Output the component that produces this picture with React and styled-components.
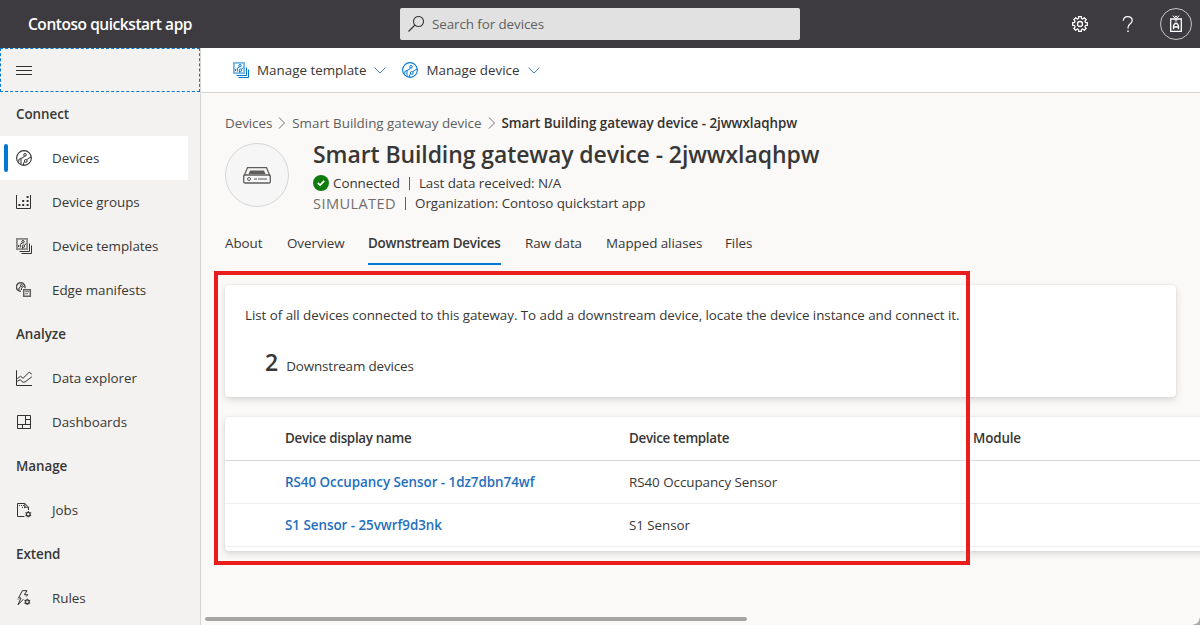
import React from "react";
import styled, { createGlobalStyle, css } from "styled-components";

const GlobalStyle = createGlobalStyle`
  * { box-sizing: border-box; }
  html, body, #root { height: 100%; margin: 0; }
  body {
    overflow: hidden;
    font-family: "Open Sans", "Noto Sans", sans-serif;
    font-size: 13.4px;
    color: #383736;
    background: #faf9f8;
  }
  svg { display: block; flex: none; }
`;

const Text = styled.span`
  white-space: nowrap;
  letter-spacing: ${(p) => p.$track ?? -0.05}px;
`;

const Page = styled.div`
  position: relative;
  display: flex;
  flex-direction: column;
  width: 1200px;
  height: 625px;
  overflow: hidden;
`;

const TopBar = styled.header`
  display: flex;
  align-items: center;
  height: 48px;
  flex: none;
  padding: 0 8px 0 28px;
  color: #fff;
  background: #3d3b40;
`;

const AppName = styled(Text)`
  width: 372px;
  font-size: 15.5px;
  font-weight: 600;
`;

const SearchBox = styled.div`
  display: flex;
  align-items: center;
  gap: 8px;
  width: 400px;
  height: 32px;
  padding-left: 8px;
  border-radius: 2px;
  color: #605e5c;
  background: #e1e1e1;
`;

const TopActions = styled.div`
  display: flex;
  align-items: center;
  margin-left: auto;
  gap: 32px;
`;

const Avatar = styled.div`
  display: grid;
  place-items: center;
  width: 32px;
  height: 32px;
  margin-left: -8px;
  border: 1px solid #c8c6c4;
  border-radius: 50%;
`;

const Body = styled.div`
  display: flex;
  flex: 1;
  min-height: 0;
`;

const Sidebar = styled.nav`
  flex: none;
  width: 201px;
  border-right: 1px solid #d6d5d4;
  background: #f3f2f1;
`;

const MenuToggle = styled.div`
  display: flex;
  align-items: center;
  height: 44px;
  padding-left: 15px;
  border: 1px dashed #0078d4;
`;

const GroupTitle = styled.div`
  display: flex;
  align-items: center;
  height: 44px;
  padding-left: 16px;
  font-weight: 600;
`;

const NavItem = styled.div`
  display: flex;
  align-items: center;
  width: 188px;
  height: 44px;
  padding-left: ${(p) => (p.$active ? 4 : 16)}px;
  background: ${(p) => (p.$active ? "#fff" : "transparent")};
  svg { margin-right: 20px; }
`;

const ActiveMark = styled.span`
  width: 4px;
  height: 28px;
  margin-right: 8px;
  border-radius: 2px;
  background: #0078d4;
`;

const Main = styled.main`
  display: flex;
  flex-direction: column;
  flex: 1;
  min-width: 0;
  overflow: hidden;
`;

const CommandBar = styled.div`
  display: flex;
  flex: none;
  align-items: center;
  gap: 16px;
  height: 45px;
  padding-left: 32px;
  border-bottom: 1px solid #d6d5d4;
  background: #fff;
`;

const Command = styled.div`
  display: flex;
  align-items: center;
  gap: 8px;
`;

const Content = styled.div`
  display: flex;
  flex-direction: column;
  flex: 1;
  padding: 20px 0 0 24px;
`;

const Breadcrumb = styled.div`
  display: flex;
  align-items: center;
  height: 20px;
  color: #605e5c;
  svg { margin: 0 6px; }
`;

const Current = styled(Text)`
  font-weight: 600;
  color: #323130;
`;

const DeviceHeader = styled.div`
  display: flex;
  gap: 24px;
  height: 84px;
`;

const DeviceBadge = styled.div`
  display: grid;
  place-items: center;
  width: 64px;
  height: 64px;
  margin-top: 10px;
  border: 1px solid #d6d6d6;
  border-radius: 50%;
  background: #f6f6f6;
`;

const DeviceInfo = styled.div`
  display: flex;
  flex-direction: column;
`;

const Title = styled.h1`
  height: 40px;
  margin: 0;
  font-size: 23px;
  font-weight: 600;
  line-height: 43px;
`;

const InfoLine = styled.div`
  display: flex;
  align-items: center;
  height: 20px;
`;

const Status = styled(Text)`
  margin-left: 4px;
`;

const Divider = styled.span`
  width: 1px;
  height: 13px;
  margin: 0 9px;
  background: #605e5c;
`;

const Simulated = styled(Text)`
  font-size: 14.6px;
  color: #72706e;
`;

const Tabs = styled.div`
  display: flex;
  gap: 24px;
  height: 48px;
`;

const Tab = styled.div`
  width: ${(p) => p.$width}px;
  height: 48px;
  line-height: 53px;
  ${(p) => p.$active && css`
    font-weight: 600;
    border-bottom: 2px solid #0078d4;
  `}
`;

const cardShadow = css`
  border-radius: 4px;
  background: #fff;
  box-shadow: 0 3px 7px rgba(0, 0, 0, 0.13), 0 0 2px rgba(0, 0, 0, 0.1);
`;

const SummaryCard = styled.section`
  ${cardShadow}
  width: 951px;
  height: 112px;
  margin-top: 20px;
  padding: 20px;
`;

const Description = styled.div`
  height: 20px;
  line-height: 20px;
`;

const CountRow = styled.div`
  display: flex;
  align-items: baseline;
  gap: 8px;
  margin-top: 19px;
  padding-left: 20px;
  line-height: 36px;
`;

const Count = styled.span`
  font-size: 23px;
  font-weight: 600;
`;

const Table = styled.section`
  ${cardShadow}
  width: 1100px;
  height: 134px;
  margin-top: 20px;
`;

const Row = styled.div`
  display: grid;
  grid-template-columns: 344px 344px 1fr;
  align-items: center;
  height: ${(p) => (p.$head ? 44 : 43)}px;
  padding-left: 60px;
  padding-bottom: ${(p) => (p.$head ? 1 : 0)}px;
  border-bottom: 1px solid ${(p) => (p.$head ? "#d8d8d8" : "#efeeed")};
  font-weight: ${(p) => (p.$head ? 600 : 400)};
`;

const DeviceLink = styled(Text)`
  font-weight: 600;
  color: #1f6fbd;
`;

const ScrollTrack = styled.div`
  margin-top: auto;
  margin-left: -20px;
  padding-bottom: 4px;
`;

const ScrollThumb = styled.div`
  width: 542px;
  height: 4px;
  border-radius: 2px;
  background: #a6a5a4;
`;

const Highlight = styled.div`
  position: absolute;
  left: 214px;
  top: 271px;
  width: 756px;
  height: 294px;
  border: 4px solid #ea1c1c;
  pointer-events: none;
`;

const WindowCorner = styled.div`
  position: absolute;
  right: 0;
  bottom: 0;
  width: 7px;
  height: 7px;
  background: radial-gradient(circle at 0 0, transparent 6px, #a9a8a8 7px);
`;

const Svg = ({ w = 16, h = 16, box, color = "#323130", children }) => (
  <svg width={w} height={h} viewBox={box || `0 0 ${w} ${h}`} fill="none" stroke={color} strokeWidth="1">
    {children}
  </svg>
);

const Circuit = () => (
  <>
    <circle cx="9" cy="4.8" r="1.3" />
    <circle cx="9.8" cy="10.9" r="1.4" />
    <path d="M8.4 6L7.7 7.2L5 8.4V13.8M2.8 11.8V9.5L5 8.4M10.8 9.8L13 8L15 7.2M8.7 11.8L7.6 13V15" />
  </>
);

const DeviceIcon = ({ color }) => (
  <Svg color={color}><circle cx="8" cy="8" r="7.4" strokeWidth="1.1" /><Circuit /></Svg>
);

const TemplateIcon = ({ color = "#323130" }) => (
  <Svg color={color}>
    <path d="M.9 .9H11.1V11.1H.9Z" strokeWidth="1.8" opacity=".55" />
    <circle cx="7" cy="3.7" r="1.2" />
    <circle cx="7.4" cy="8.2" r="1.2" />
    <path d="M6.5 5L4.3 6.2V9.5M2.5 9V7M8.4 7.2L10.4 5.5M6.6 9V10.6" />
    <path d="M13.5 5.5V13.5H3.5M15.5 7.5V15.5H5.5" />
  </Svg>
);

const GroupsIcon = () => (
  <Svg>
    <path d="M.5 1V14.5H14.5V1" />
    <path d="M2.4 11H4.4M6.2 11H8.2M10.6 11H12.6M6.2 7H8.2M10.6 7H12.6M10.6 3H12.6" strokeWidth="2" />
  </Svg>
);

const EdgeIcon = () => (
  <Svg>
    <path d="M8.8 6.3A4.3 4.3 0 1 0 5 9.3" strokeWidth="1.4" opacity=".85" />
    <circle cx="5.4" cy="3.5" r="1" />
    <path d="M4.8 4.6L3 6V8.2M7.8 4.2L5.4 6.2V8" />
    <path d="M7.7 7.7H14.3V14.3H7.7Z" strokeWidth="1.5" opacity=".75" />
    <path d="M9.2 9.7H13M9.2 11.7H12" opacity=".7" />
  </Svg>
);

const ExplorerIcon = () => (
  <Svg>
    <path d="M.5 .3V15.5H16" />
    <path d="M1.2 8.7L4.5 6.3L7 8.3L13.2 2.2L15.8 4.2M1.2 11.3L4.2 9.8L7.2 12.3L9 12L15.8 6.8" />
  </Svg>
);

const DashboardIcon = () => (
  <Svg><path d="M1.5 1.5H14.5V14.5H1.5ZM9.5 1.5V10.5M1.5 10.5H14.5M9.5 5.5H14.5M6.5 10.5V14.5" /></Svg>
);

const SmallGear = ({ x, y }) => (
  <g transform={`translate(${x} ${y})`}>
    <circle r="1.9" strokeWidth="1.3" />
    <path d="M0 -3.2V-2M0 3.2V2M-2.9 -1.6L-1.8 -1M2.9 -1.6L1.8 -1M-2.9 1.6L-1.8 1M2.9 1.6L1.8 1" />
  </g>
);

const JobsIcon = () => (
  <Svg>
    <path d="M8.3 14.5H1.5V1.5H8.8L12.5 5.2V8M8.8 1.5V5.2H12.5" />
    <path d="M3 3.5H8M6 5.5H9" strokeDasharray="1 1" />
    <SmallGear x={12.3} y={12.2} />
  </Svg>
);

const RulesIcon = () => (
  <Svg>
    <path d="M6.3 .7L2.6 8H5L2 14.8L7.4 9.2M6.3 .7H11L8.4 4.7H11.8L10 6.7" />
    <path d="M1.6 9.2H2.4" />
    <SmallGear x={11.3} y={11.8} />
  </Svg>
);

const gearPath = (() => {
  const pts = [];
  for (let i = 0; i < 8; i += 1) {
    const a = (i * Math.PI) / 4;
    [[-0.26, 5.7], [-0.18, 7.6], [0.18, 7.6], [0.26, 5.7]].forEach(([d, r]) => {
      pts.push(`${(8 + r * Math.sin(a + d)).toFixed(2)} ${(8 - r * Math.cos(a + d)).toFixed(2)}`);
    });
  }
  return `M${pts.join("L")}Z`;
})();

const GearIcon = () => (
  <Svg color="#fff">
    <path d={gearPath} strokeWidth="1.3" strokeLinejoin="round" />
    <circle cx="8" cy="8" r="2.5" strokeWidth="1.3" />
  </Svg>
);

const HelpIcon = () => (
  <Svg color="#fff">
    <path d="M3.3 4.7C3.3 2.2 5.2 .6 7.8 .6C10.5 .6 12.2 2.2 12.2 4.5C12.2 7.9 8 7.8 8 11.6V12.4" strokeWidth="1.2" />
    <path d="M8 14.4V16" strokeWidth="1.5" />
  </Svg>
);

const BadgeIcon = () => (
  <Svg w={16} h={18} color="#fff">
    <path d="M2.7 4H13.3V16.4H2.7Z" strokeWidth="1.3" />
    <path d="M4.8 .6L8 4.4L11.2 .6M7 .8L8 2.4L9 .8M6.8 5.9H9.2" />
    <path d="M5.5 14.2V10.8L7 8.5H9L10.5 10.8V14.2M5.5 12H10.5" strokeWidth="1.3" />
  </Svg>
);

const SearchIcon = () => (
  <Svg color="#3b3a39"><circle cx="10.5" cy="5.5" r="5" strokeWidth="1.1" /><path d="M7 9L.5 15.5" strokeWidth="1.2" /></Svg>
);

const ChevronDown = () => <Svg w={12} h={7} color="#3f7cae"><path d="M.5 .6L6 6.1L11.5 .6" /></Svg>;
const ChevronRight = () => <Svg w={8} h={12} color="#72706e"><path d="M1 .5L6.5 6L1 11.5" /></Svg>;

const GatewayIcon = () => (
  <Svg w={28} h={17} color="#605e5c">
    <rect x=".7" y="8" width="26.6" height="8" rx="1.3" strokeWidth="1.3" />
    <path d="M1 9L4.5 .7H23.5L27 9" strokeWidth="1.2" />
    <path d="M5.5 7L7 3.5H21L22.5 7Z" fill="#605e5c" stroke="none" />
    <circle cx="6" cy="12" r="1.5" />
    <path d="M11 12H14M15 12H24" strokeWidth="1.6" opacity=".7" />
  </Svg>
);

const CheckIcon = () => (
  <svg width="16" height="16" viewBox="0 0 16 16">
    <circle cx="8" cy="8" r="8" fill="#107c10" />
    <path d="M4.8 8L7.1 10.1L11.2 5.8" fill="none" stroke="#fff" strokeWidth="1.7" />
  </svg>
);

const navigation = [
  { title: "Connect", items: [
    { label: "Devices", icon: <DeviceIcon />, active: true },
    { label: "Device groups", icon: <GroupsIcon /> },
    { label: "Device templates", icon: <TemplateIcon /> },
    { label: "Edge manifests", icon: <EdgeIcon /> },
  ] },
  { title: "Analyze", items: [
    { label: "Data explorer", icon: <ExplorerIcon /> },
    { label: "Dashboards", icon: <DashboardIcon /> },
  ] },
  { title: "Manage", items: [{ label: "Jobs", icon: <JobsIcon /> }] },
  { title: "Extend", items: [{ label: "Rules", icon: <RulesIcon /> }] },
];

const tabs = [
  { label: "About", width: 38 },
  { label: "Overview", width: 57 },
  { label: "Downstream Devices", width: 133, active: true },
  { label: "Raw data", width: 57 },
  { label: "Mapped aliases", width: 95 },
  { label: "Files", width: 28 },
];

const devices = [
  { name: "RS40 Occupancy Sensor - 1dz7dbn74wf", template: "RS40 Occupancy Sensor" },
  { name: "S1 Sensor - 25vwrf9d3nk", template: "S1 Sensor" },
];

export default function App() {
  return (
    <Page>
      <GlobalStyle />
      <TopBar>
        <AppName $track={-0.45}>Contoso quickstart app</AppName>
        <SearchBox><SearchIcon /><Text $track={-0.08}>Search for devices</Text></SearchBox>
        <TopActions>
          <GearIcon />
          <HelpIcon />
          <Avatar><BadgeIcon /></Avatar>
        </TopActions>
      </TopBar>
      <Body>
        <Sidebar>
          <MenuToggle><Svg><path d="M0 4.5H16M0 8.5H16M0 12.5H16" /></Svg></MenuToggle>
          {navigation.map((group) => (
            <React.Fragment key={group.title}>
              <GroupTitle><Text>{group.title}</Text></GroupTitle>
              {group.items.map((item) => (
                <NavItem key={item.label} $active={item.active}>
                  {item.active && <ActiveMark />}
                  {item.icon}
                  <Text>{item.label}</Text>
                </NavItem>
              ))}
            </React.Fragment>
          ))}
        </Sidebar>
        <Main>
          <CommandBar>
            <Command><TemplateIcon color="#0078d4" /><Text $track={0}>Manage template</Text><ChevronDown /></Command>
            <Command><DeviceIcon color="#0078d4" /><Text $track={0}>Manage device</Text><ChevronDown /></Command>
          </CommandBar>
          <Content>
            <Breadcrumb>
              <Text>Devices</Text><ChevronRight />
              <Text $track={-0.02}>Smart Building gateway device</Text><ChevronRight />
              <Current $track={-0.03}>Smart Building gateway device - 2jwwxlaqhpw</Current>
            </Breadcrumb>
            <DeviceHeader>
              <DeviceBadge><GatewayIcon /></DeviceBadge>
              <DeviceInfo>
                <Title><Text $track={-0.09}>Smart Building gateway device - 2jwwxlaqhpw</Text></Title>
                <InfoLine>
                  <CheckIcon /><Status>Connected</Status><Divider /><Text>Last data received: N/A</Text>
                </InfoLine>
                <InfoLine>
                  <Simulated $track={0.4}>SIMULATED</Simulated><Divider /><Text>Organization: Contoso quickstart app</Text>
                </InfoLine>
              </DeviceInfo>
            </DeviceHeader>
            <Tabs>
              {tabs.map((t) => (
                <Tab key={t.label} $width={t.width} $active={t.active}>
                  <Text $track={t.active ? -0.19 : -0.05}>{t.label}</Text>
                </Tab>
              ))}
            </Tabs>
            <SummaryCard>
              <Description>
                <Text>List of all devices connected to this gateway. To add a downstream device, locate the device instance and connect it.</Text>
              </Description>
              <CountRow><Count>2</Count><Text $track={-0.13}>Downstream devices</Text></CountRow>
            </SummaryCard>
            <Table>
              <Row $head>
                <Text $track={-0.3}>Device display name</Text>
                <Text $track={-0.32}>Device template</Text>
                <Text $track={-0.15}>Module</Text>
              </Row>
              {devices.map((d) => (
                <Row key={d.name}><DeviceLink $track={-0.03}>{d.name}</DeviceLink><Text>{d.template}</Text></Row>
              ))}
            </Table>
            <ScrollTrack><ScrollThumb /></ScrollTrack>
          </Content>
        </Main>
      </Body>
      <Highlight />
      <WindowCorner />
    </Page>
  );
}
